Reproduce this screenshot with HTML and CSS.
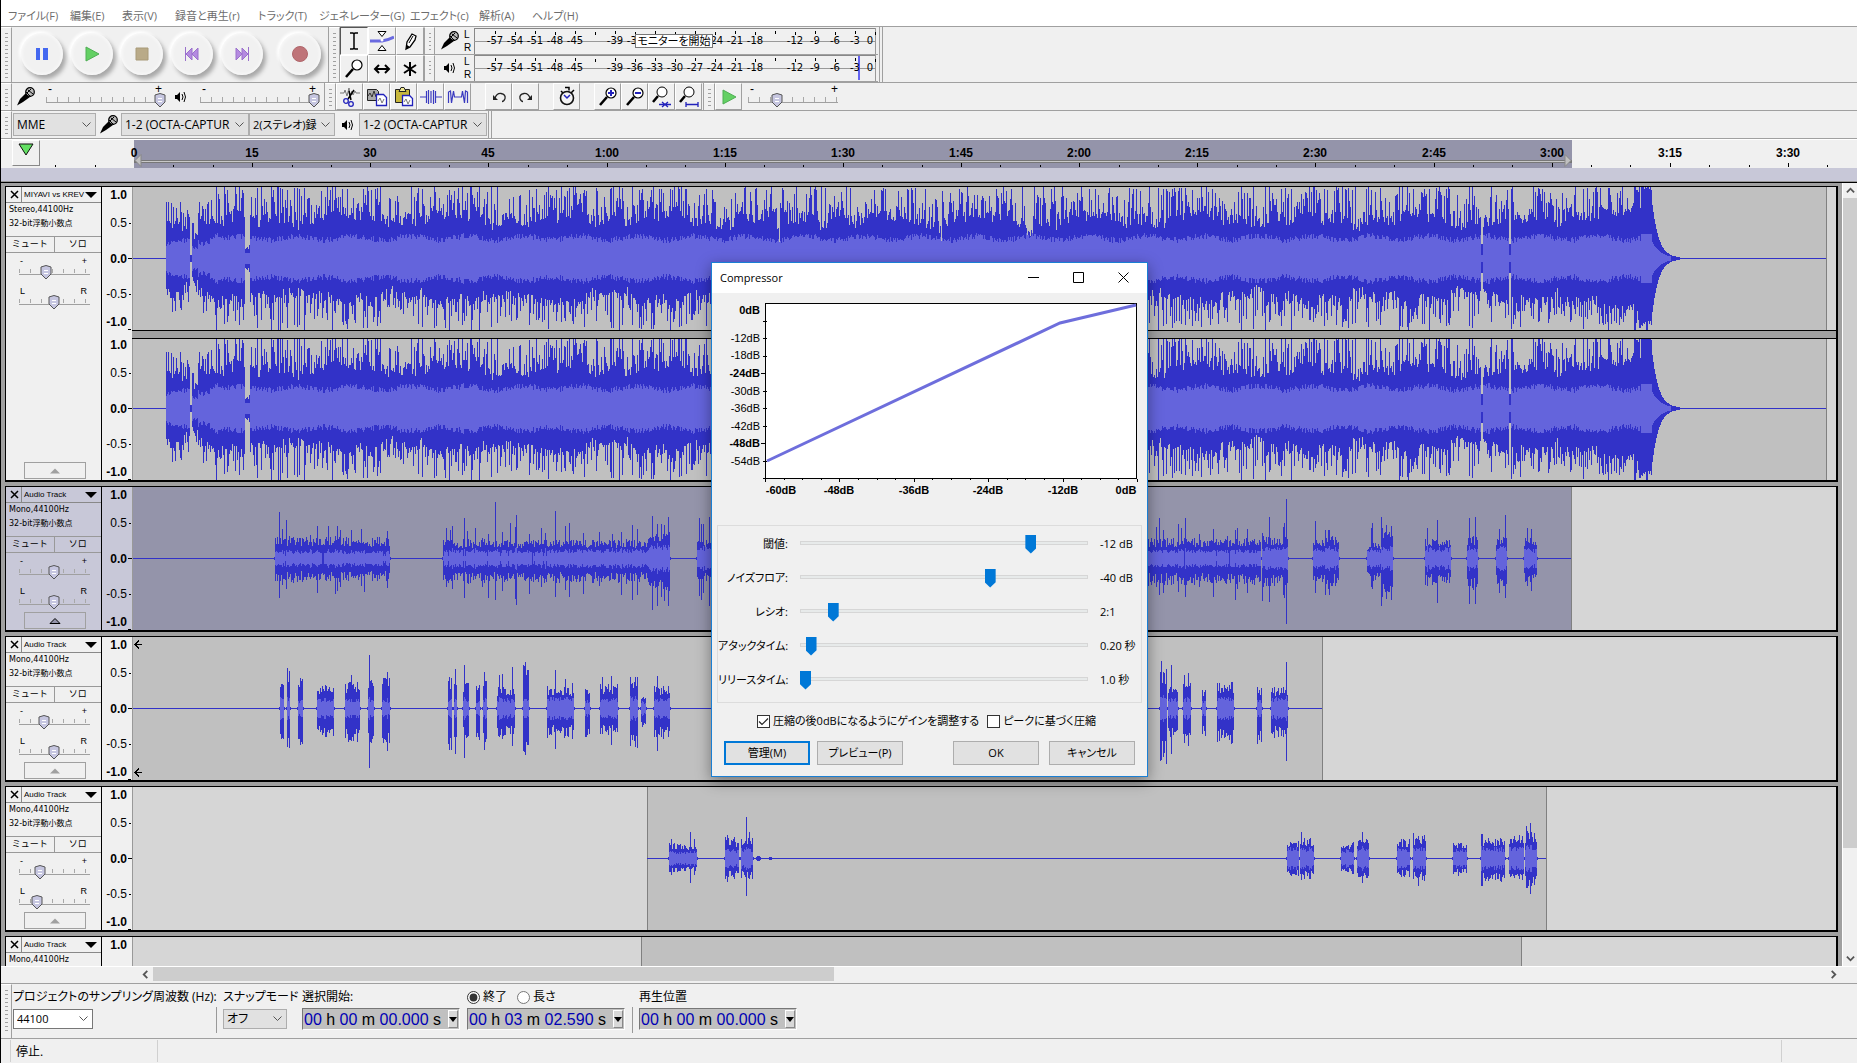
FILE: index.html
```html
<!DOCTYPE html>
<html lang="ja">
<head>
<meta charset="utf-8">
<title>Audacity</title>
<link rel="stylesheet" href="styles.css">
</head>
<body>
<svg class="defs" aria-hidden="true">
  <defs>
    <symbol id="mic" viewBox="0 0 18 19"><path d="M0 18.500L3 12L9 6L13 10L6 15Z" fill="#000"/><circle cx="13" cy="5" r="4.300" fill="#bbb" stroke="#000" stroke-width="1.200"/><path d="M9 5l5 5M11 3l5 4M14 2l-4 4" stroke="#000" fill="none"/></symbol>
    <symbol id="speaker" viewBox="0 0 14 14"><path d="M1 5h2l3-3v10l-3-3H1z" fill="#000"/><path d="M8 4q2 3 0 6M10 2q3 5 0 10" stroke="#000" fill="none"/></symbol>
    <symbol id="ibeam" viewBox="0 0 24 24"><path d="M8 4h3l1 1 1-1h3M8 20h3l1-1 1 1h3M12 5v14" stroke="#000" stroke-width="1.5" fill="none"/></symbol>
    <symbol id="envelope" viewBox="0 0 24 24"><path d="M0 12h12q6-1 12-4" stroke="#6a6ae0" stroke-width="3" fill="none"/><circle cx="12" cy="11" r="1.5" fill="#fff"/><path d="M8 2.500h8l-4 5zM8 21.500h8l-4-5z" fill="#fff" stroke="#000"/></symbol>
    <symbol id="pencil" viewBox="0 0 24 24"><path d="M8 20l1-7 5-8 4 2-1 4-5 7z" fill="#fff" stroke="#000" stroke-width="1.300"/><path d="M8 20l1-4 3 2z"/><path d="M11 14l4-7" stroke="#000" fill="none"/></symbol>
    <symbol id="lens" viewBox="0 0 24 24"><circle cx="15" cy="8" r="5" fill="#fff" stroke="#000" stroke-width="1.200"/><path d="M11 12l-7 8" stroke="#000" stroke-width="2.500"/></symbol>
    <symbol id="shift" viewBox="0 0 24 24"><path d="M5 12h14M9 8l-4 4 4 4M15 8l4 4-4 4" stroke="#000" stroke-width="2" fill="none"/></symbol>
    <symbol id="multi" viewBox="0 0 24 24"><path d="M12 5v14M6 8l12 8M18 8L6 16" stroke="#000" stroke-width="2" fill="none"/></symbol>
    <symbol id="cut" viewBox="0 0 24 24"><path d="M2 8h4l1-3 2 6 2-8 1 8 2-5 1 4 2-4 1 2h4" stroke="#777" fill="none"/><path d="M10 14L16 5M13 15L11 6" stroke="#000" stroke-width="1.500"/><circle cx="8" cy="16" r="2.300" fill="none" stroke="#2222bb" stroke-width="1.300"/><circle cx="13" cy="19" r="2.300" fill="none" stroke="#2222bb" stroke-width="1.300"/></symbol>
    <symbol id="copy" viewBox="0 0 24 24"><path d="M2.500 4.500h9l2 2v9h-11z" fill="#aaa" stroke="#222"/><path d="M3 11l2-3 2 4 2-6 2 6" stroke="#333" fill="none"/><path d="M11.500 9.500h7l3 3v8h-10z" fill="#fff" stroke="#2222bb" stroke-width="1.300"/><path d="M13 16l2-3 2 5 2-4" stroke="#777" fill="none"/></symbol>
    <symbol id="paste" viewBox="0 0 24 24"><path d="M3.500 4.500h14v13h-14z" fill="#c8b83c" stroke="#222"/><path d="M7 6.500h7l-2-4H9z" fill="#f0e890" stroke="#222"/><path d="M10.500 10.500h7l3 3v7h-10z" fill="#fff" stroke="#2222bb" stroke-width="1.300"/><path d="M12 17l2-3 2 5 2-4" stroke="#777" fill="none"/></symbol>
    <symbol id="trim" viewBox="0 0 24 24"><path d="M1 12h6M17 12h6M7.500 6v12M9.500 5v14M12 6v12M14.500 5v14M16.500 6v12" stroke="#3a3ac0" stroke-width="1.200"/></symbol>
    <symbol id="silence" viewBox="0 0 24 24"><path d="M2.500 18V7l2-1 1 12 2-12 1 6h7l1-6 2 12 1-12 2 1v11" stroke="#3a3ac0" stroke-width="1.200" fill="none"/></symbol>
    <symbol id="undo" viewBox="0 0 24 24"><path d="M8 13Q10 8 14 8.500q5 1 4 5-1 3-3 3" stroke="#222" stroke-width="1.300" fill="none"/><path d="M6 10v5h5z" fill="#222"/></symbol>
    <symbol id="redo" viewBox="0 0 24 24"><path d="M16 13Q14 8 10 8.500q-5 1-4 5 1 3 3 3" stroke="#222" stroke-width="1.300" fill="none"/><path d="M18 10v5h-5z" fill="#222"/></symbol>
    <symbol id="clock" viewBox="0 0 24 24"><path d="M10 2.500h4v3M6 6l2 2M19 5l-3 3" stroke="#000" stroke-width="1.500" fill="none"/><circle cx="12" cy="13" r="6.500" fill="#f4f4f4" stroke="#111" stroke-width="1.600"/><path d="M9 10l3 3 3-3" stroke="#2222bb" stroke-width="1.500" fill="none"/></symbol>
    <symbol id="zoomin" viewBox="0 0 24 24"><use href="#lens"/><path d="M12 8h6M15 5v6" stroke="#2222bb" stroke-width="2"/></symbol>
    <symbol id="zoomout" viewBox="0 0 24 24"><use href="#lens"/><path d="M12 8h6" stroke="#2222bb" stroke-width="2"/></symbol>
    <symbol id="fitsel" viewBox="0 0 24 24"><circle cx="12" cy="7" r="5" fill="#fff" stroke="#000"/><path d="M8 11l-5 6" stroke="#000" stroke-width="2.500"/><path d="M9 19.500h12M12 17l3 2.500-3 2.500M18 17l-3 2.500 3 2.500" stroke="#2222bb" stroke-width="1.300" fill="none"/></symbol>
    <symbol id="fitproj" viewBox="0 0 24 24"><circle cx="12" cy="7" r="5" fill="#fff" stroke="#000"/><path d="M8 11l-5 6" stroke="#000" stroke-width="2.500"/><path d="M9 19.500h12M9 17v5M21 17v5" stroke="#2222bb" stroke-width="1.300" fill="none"/></symbol>
    <symbol id="play" viewBox="0 0 24 24"><path d="M6 5l13 7-13 7z" fill="#63d063" stroke="#4fae55"/></symbol>
    <symbol id="pause" viewBox="0 0 24 24"><path d="M6 6h4v12H6zM13 6h5v12h-5z" fill="#4468f0"/></symbol>
    <symbol id="stop" viewBox="0 0 24 24"><path d="M6 6h12v12H6z" fill="#b9aa88" stroke="#a89a78"/></symbol>
    <symbol id="start" viewBox="0 0 24 24"><path d="M5.500 5v14M12 6l-6 6 6 6zM18 6l-6 6 6 6z" fill="#b48ae0" stroke="#9a70cc"/></symbol>
    <symbol id="end" viewBox="0 0 24 24"><path d="M18.500 5v14M12 6l6 6-6 6zM6 6l6 6-6 6z" fill="#b48ae0" stroke="#9a70cc"/></symbol>
    <symbol id="record" viewBox="0 0 24 24"><circle cx="12" cy="12" r="7.500" fill="#bf7479" stroke="#b0666b"/></symbol>
  </defs>
</svg>

<nav class="menubar">
  <a href="#">ファイル(F)</a><a href="#">編集(E)</a><a href="#">表示(V)</a><a href="#">録音と再生(r)</a><a href="#">トラック(T)</a><a href="#">ジェネレーター(G)</a><a href="#">エフェクト(c)</a><a href="#">解析(A)</a><a href="#">ヘルプ(H)</a>
</nav>

<div class="row row-main">
  <span class="grip"></span>
  <div class="transport">
    <button aria-label="一時停止"><svg><use href="#pause"/></svg></button>
    <button aria-label="再生"><svg><use href="#play"/></svg></button>
    <button aria-label="停止"><svg><use href="#stop"/></svg></button>
    <button aria-label="先頭へ"><svg><use href="#start"/></svg></button>
    <button aria-label="末尾へ"><svg><use href="#end"/></svg></button>
    <button class="rec" aria-label="録音"><svg><use href="#record"/></svg></button>
  </div>
  <span class="grip"></span>
  <div class="tools">
    <button class="tool on" aria-label="選択"><svg><use href="#ibeam"/></svg></button>
    <button class="tool" aria-label="エンベロープ"><svg><use href="#envelope"/></svg></button>
    <button class="tool" aria-label="描画"><svg><use href="#pencil"/></svg></button>
    <button class="tool" aria-label="ズーム"><svg><use href="#lens"/></svg></button>
    <button class="tool" aria-label="タイムシフト"><svg><use href="#shift"/></svg></button>
    <button class="tool" aria-label="マルチツール"><svg><use href="#multi"/></svg></button>
  </div>
  <div class="meters">
    <div class="meter"><span class="grip"></span><svg class="ic-mic"><use href="#mic"/></svg><span class="lr"><i>L</i><i>R</i></span><svg class="scale" data-kind="rec"></svg><span class="tip">モニターを開始</span></div>
    <div class="meter"><span class="grip"></span><svg class="ic-spk"><use href="#speaker"/></svg><span class="lr"><i>L</i><i>R</i></span><svg class="scale" data-kind="play"></svg></div>
  </div>
  <span class="endcap"></span>
</div>

<div class="row">
  <span class="grip"></span>
  <div class="mixer">
    <svg class="ic-mic"><use href="#mic"/></svg>
    <div class="vol"><span class="pm"><b>-</b><b>+</b></span><input class="slide" type="range" value="100" aria-label="録音音量"></div>
    <svg class="ic-spk"><use href="#speaker"/></svg>
    <div class="vol"><span class="pm"><b>-</b><b>+</b></span><input class="slide" type="range" value="100" aria-label="再生音量"></div>
  </div>
  <span class="grip"></span>
  <div class="edit">
    <div class="group"><button class="tool" aria-label="切り取り"><svg><use href="#cut"/></svg></button><button class="tool" aria-label="コピー"><svg><use href="#copy"/></svg></button><button class="tool" aria-label="貼り付け"><svg><use href="#paste"/></svg></button><button class="tool" aria-label="トリム"><svg><use href="#trim"/></svg></button><button class="tool" aria-label="無音化"><svg><use href="#silence"/></svg></button></div>
    <div class="group"><button class="tool" aria-label="元に戻す"><svg><use href="#undo"/></svg></button><button class="tool" aria-label="やり直す"><svg><use href="#redo"/></svg></button></div>
    <div class="group"><button class="tool" aria-label="同期ロック"><svg><use href="#clock"/></svg></button></div>
    <div class="group"><button class="tool" aria-label="拡大"><svg><use href="#zoomin"/></svg></button><button class="tool" aria-label="縮小"><svg><use href="#zoomout"/></svg></button><button class="tool" aria-label="選択範囲に合わせる"><svg><use href="#fitsel"/></svg></button><button class="tool" aria-label="全体に合わせる"><svg><use href="#fitproj"/></svg></button></div>
  </div>
  <span class="grip"></span>
  <button class="tool" aria-label="指定速度で再生"><svg><use href="#play"/></svg></button>
  <div class="vol speed"><span class="pm"><b>-</b><b>+</b></span><input class="slide" type="range" value="30" aria-label="再生速度"></div>
</div>

<div class="row devices">
  <span class="grip"></span>
  <select class="host" aria-label="ホスト"><option>MME</option></select>
  <svg class="ic-mic"><use href="#mic"/></svg>
  <select class="device" aria-label="録音デバイス"><option>1-2 (OCTA-CAPTUR</option></select>
  <select class="host channels" aria-label="チャンネル"><option>2(ステレオ)録</option></select>
  <svg class="ic-spk"><use href="#speaker"/></svg>
  <select class="device" aria-label="再生デバイス"><option>1-2 (OCTA-CAPTUR</option></select>
  <span class="endcap"></span>
</div>

<div class="timeline">
  <button class="pin" aria-label="再生ヘッド"><svg viewBox="0 0 16 13"><path d="M1 1h14L8 12z" fill="#63e063" stroke="#111"/></svg></button>
  <svg id="ruler"></svg>
</div>
<div class="subruler"></div>

<main class="workspace">
  <div class="tracks" id="tracks"></div>
  <div class="vscroll"><span class="arrow"><svg viewBox="0 0 10 10"><path d="M1 7l4-4 4 4" /></svg></span><span class="vthumb"></span><span class="arrow low"><svg viewBox="0 0 10 10"><path d="M1 3l4 4 4-4" /></svg></span></div>
</main>
<div class="hscroll"><span class="arrow"><svg viewBox="0 0 10 10"><path d="M7 1L3 5l4 4" /></svg></span><span class="hthumb"></span><span class="arrow"><svg viewBox="0 0 10 10"><path d="M3 1l4 4-4 4" /></svg></span></div>

<footer class="selection">
  <span class="grip"></span>
  <div class="field rate"><label for="rate">プロジェクトのサンプリング周波数 (Hz):</label><select id="rate"><option>44100</option></select></div>
  <span class="rule"></span>
  <div class="field snap"><label for="snap">スナップモード</label><select id="snap"><option>オフ</option></select></div>
  <div class="field"><span>選択開始:</span><div class="time"><span><b>00</b> h <b>00</b> m <b>00.000</b> s</span><button aria-label="形式"></button></div></div>
  <div class="field"><span class="radios"><label><input type="radio" name="mode" checked>終了</label><label><input type="radio" name="mode">長さ</label></span><div class="time"><span><b>00</b> h <b>03</b> m <b>02.590</b> s</span><button aria-label="形式"></button></div></div>
  <span class="rule"></span>
  <div class="field"><span>再生位置</span><div class="time"><span><b>00</b> h <b>00</b> m <b>00.000</b> s</span><button aria-label="形式"></button></div></div>
</footer>
<div class="status"><span class="s1">停止.</span><span class="s2"></span></div>

<section class="dialog" role="dialog" aria-label="Compressor">
  <header><h1>Compressor</h1>
    <button aria-label="最小化"><svg viewBox="0 0 11 11"><path d="M0 5.500h11"/></svg></button><button aria-label="最大化"><svg viewBox="0 0 11 11"><path d="M.5.5h10v10H.5z"/></svg></button><button aria-label="閉じる"><svg viewBox="0 0 11 11"><path d="M.5.5l10 10M10.500.5l-10 10"/></svg></button>
  </header>
  <svg id="curve"></svg>
  <div class="params">
    <label for="p1">閾値:</label><input id="p1" type="range" min="-60" max="-1" value="-12"><output>-12 dB</output>
    <label for="p2">ノイズフロア:</label><input id="p2" type="range" min="-80" max="-20" value="-40"><output>-40 dB</output>
    <label for="p3">レシオ:</label><input id="p3" type="range" value="10"><output>2:1</output>
    <label for="p4">アタックタイム:</label><input id="p4" type="range" value="2"><output>0.20 秒</output>
    <label for="p5">リリースタイム:</label><input id="p5" type="range" value="0"><output>1.0 秒</output>
  </div>
  <div class="checks"><label><input type="checkbox" checked>圧縮の後0dBになるようにゲインを調整する</label><label><input type="checkbox">ピークに基づく圧縮</label></div>
  <div class="actions"><button class="primary">管理(M)</button><button>プレビュー(P)</button><button class="ok">OK</button><button>キャンセル</button></div>
</section>
<script src="app.js"></script>
</body>
</html>
```
FILE: styles.css
```css
* { box-sizing: border-box; }
html, body { height: 100%; }
body {
  margin: 0; display: flex; flex-direction: column; overflow: hidden; position: relative;
  border-left: 1px solid #000; background: #f0f0f0; color: #000;
  font: 12px/16px "Open Sans", "Noto Sans CJK JP", sans-serif;
  font-feature-settings: "palt";
}
button, select, input { font: inherit; font-feature-settings: inherit; color: inherit; margin: 0; padding: 0; border-radius: 0; }
svg { display: block; flex: none; }
.defs { position: absolute; width: 0; height: 0; }
a { color: inherit; text-decoration: none; }

.menubar { flex: none; display: grid; grid-template-columns: 62px 52px 53px 83px 61px 91px 69px 53px auto; justify-content: start; height: 27px; padding: 8px 0 0 7px; background: #fff; border-bottom: 1px solid #a0a0a0; color: #6d6d6d; font-size: 11px; white-space: nowrap; }

.row { flex: none; display: flex; height: 28px; border-bottom: 1px solid #a0a0a0; }
.row-main { height: 56px; }
.grip { flex: none; width: 11px; border-right: 1px solid #a0a0a0; background: repeating-linear-gradient(#a0a0a0 0 1px, transparent 1px 4px) content-box; padding: 5px 3px 4px 4px; border-top: 1px solid #fff; }
.endcap { width: 4px; margin-left: 1px; border: solid #a0a0a0; border-width: 0 1px; }

.transport { width: 317px; display: flex; align-items: center; gap: 8px; padding: 0 0 2px 9px; border-right: 1px solid #a0a0a0; }
.transport button { width: 42px; height: 42px; display: grid; place-items: center; border: 0; border-radius: 50%; background: #f1f1f1; box-shadow: 3px 4px 4px #a8a8a8, -2px -2px 3px #fff, inset 0 0 4px #fff; }
.transport svg { width: 24px; height: 24px; }
.transport .rec { margin-left: 8px; }

.tool { flex: none; width: 27px; height: 27px; display: grid; place-items: center; background: #f0f0f0; border: 1px solid; border-color: #fff #a0a0a0 #a0a0a0 #fff; }
.tool svg { width: 24px; height: 24px; }
.tools { display: grid; grid-template-columns: 28px 28px 28px; grid-template-rows: 28px 27px; }
.tools .tool { width: 28px; height: auto; }
.tools .on { border-color: #555 #fff #fff #555; }

.meters { display: grid; grid-template-rows: 28px 27px; }
.meter { display: flex; align-items: center; position: relative; border-bottom: 1px solid #a0a0a0; }
.meter .grip { align-self: stretch; border-left: 1px solid #a0a0a0; }
.meter .ic-mic { margin-left: 6px; }
.meter .ic-spk { margin: 0 2px 0 8px; }
.lr { width: 11px; margin-left: 5px; margin-right: -1px; font: 10px/13px "Liberation Sans", sans-serif; }
.lr i { display: block; font-style: normal; }
.scale { width: 404px; height: 26px; font: 10px "DejaVu Sans", sans-serif; }
.tip { position: absolute; left: 211px; top: 7px; width: 78px; height: 14px; border: 1px solid #777; background: #fff; font-size: 11px; line-height: 12px; text-align: center; white-space: nowrap; }
.ic-mic { width: 18px; height: 19px; }
.ic-spk { width: 14px; height: 14px; }

.mixer { width: 313px; display: flex; align-items: center; padding-left: 5px; border-right: 1px solid #a0a0a0; }
.mixer .ic-spk { margin-left: 8px; }
.vol { width: 122px; margin-left: 9px; }
.vol + .ic-spk + .vol { margin-left: 10px; }
.pm { display: flex; justify-content: space-between; padding: 0 4px; font: 12px/8px "Liberation Sans", sans-serif; }
.pm b { font-weight: 400; }
.slide { -webkit-appearance: none; appearance: none; display: block; width: 100%; height: 15px; background:
  linear-gradient(#a0a0a0, #a0a0a0) 2px 9px / calc(100% - 6px) 1px no-repeat,
  repeating-linear-gradient(to right, #a8a8a8 0 1px, transparent 1px 11px) 2px 4px / calc(100% - 6px) 5px no-repeat; }
.slide::-webkit-slider-thumb { -webkit-appearance: none; width: 12px; height: 15px; border: 0; background: url("data:image/svg+xml,%3Csvg xmlns='http://www.w3.org/2000/svg' viewBox='0 0 12 15'%3E%3Cpath d='M1 2q5-3 10 0v7l-5 5-5-5z' fill='%23c6c6e0' stroke='%23555'/%3E%3Cpath d='M4 5.500h4M4 8.500h4' stroke='%23fff'/%3E%3C/svg%3E") no-repeat; }
.edit { display: flex; gap: 14px; padding-right: 1px; border-right: 1px solid #a0a0a0; }
.group { display: flex; }
.speed { width: 96px; margin: 2px 0 0 4px; }

select { -webkit-appearance: none; appearance: none; border: 1px solid #adadad; background: #e1e1e1 url("data:image/svg+xml,%3Csvg xmlns='http://www.w3.org/2000/svg' viewBox='0 0 9 6'%3E%3Cpath d='M.5.5l4 4 4-4' fill='none' stroke='%23555'/%3E%3C/svg%3E") no-repeat right 4px center / 9px 6px; padding: 0 3px; }
.devices { align-items: center; }
.devices select { height: 23px; }
.devices .grip, .devices .endcap { align-self: stretch; }
.host { width: 86px; }
.grip + .host { width: 83px; margin-left: 1px; }
.devices .channels { font-size: 11px; }
.device { width: 128px; }
.devices .ic-mic { margin: 0 3px 0 4px; }
.devices .ic-spk { margin: 0 4px 0 6px; }

.timeline { flex: none; display: flex; height: 29px; border-top: 1px solid #fff; overflow: hidden; }
.pin { flex: none; width: 28px; height: 26px; margin-left: 11px; padding: 2px 0 0 5px; border: 1px solid; border-color: #fff #888 #888 #fff; background: #f0f0f0; display: grid; align-items: start; }
.pin svg { width: 16px; height: 13px; }
#ruler { flex: 1; height: 28px; font: bold 12px "Liberation Sans", sans-serif; }
.subruler { flex: none; height: 15px; background: #c8c8d8; border-bottom: 1px solid #000; box-shadow: inset 0 -1px #999; }

.workspace { flex: 1; min-height: 0; display: flex; background: #a0a0a0; }
.tracks { flex: 1; min-width: 0; overflow: hidden; padding: 3px 4px 0 4px; display: flex; flex-direction: column; gap: 4px; }
.track { flex: none; display: grid; grid-template-columns: 96px 1fr; height: 146px; border: solid #000; border-width: 1px 2px 2px 1px; background: #f0f0f0; }
.track.stereo { height: 296px; }
.track.sel { background: #c8c8d8; }
.panel { display: flex; flex-direction: column; border-right: 1px solid #000; font: 9px/16px "DejaVu Sans", "Noto Sans CJK JP", sans-serif; min-height: 0; }
.title { display: grid; grid-template-columns: 16px 1fr; height: 16px; border-bottom: 1px solid #888; }
.title button { border: 0; border-right: 1px solid #888; background: none; padding: 0 0 0 4px; }
.title svg { width: 9px; height: 9px; }
.title .name { display: flex; align-items: center; justify-content: space-between; padding: 0 4px 0 2px; font: 8px/14px "Liberation Sans", sans-serif; white-space: nowrap; }
.name::after { content: ""; flex: none; border: solid transparent; border-width: 6px 6px 0; border-top-color: #000; }
.info { height: 33px; padding-left: 3px; font-size: 8px; white-space: nowrap; line-height: 14px; }
.ms { display: grid; grid-template-columns: 1fr 1fr; height: 17px; border: solid #999; border-width: 1px 0; }
.ms button { border: 0; background: none; font-size: 9px; line-height: 15px; }
.ms button + button { border-left: 1px solid #999; }
.panel .vol { width: 77px; margin: 6px 0 1px 11px; }
.panel .ms + .vol { margin-top: 4px; }
.panel .pm { font-size: 9px; padding: 0 7px 0 3px; }
.panel .slide { background-size: calc(100% - 6px) 1px, calc(100% - 6px) 4px; }
.fold { width: 62px; height: 17px; margin: auto 0 1px 18px; border: 1px solid #a0a0a0; background: none; display: grid; place-items: center; flex: none; }
.fold svg { width: 12px; height: 7px; fill: #a0a0a0; }
.sel .fold svg { fill: #9494aa; stroke: #000; }
.chans { display: grid; grid-auto-rows: 143px; row-gap: 7px; min-width: 0; }
.chan { display: grid; grid-template-columns: 31px 1fr; min-width: 0; position: relative; }
.stereo .chan + .chan::before { content: ""; position: absolute; left: 30px; right: 0; top: -7px; height: 7px; border: solid #000; border-width: 1px 0; background: #a0a0a0; }
.vr { height: 143px; border-right: 1px solid #999; font: 12px/14px "Liberation Sans", sans-serif; width: 31px; }
.wave { width: 100%; height: 143px; background: #d6d6d6; min-width: 0; }

.vscroll { flex: none; width: 15px; display: flex; flex-direction: column; background: #f0f0f0; border-left: 1px solid #fff; }
.arrow { flex: none; display: grid; place-items: center; width: 15px; height: 15px; }
.arrow svg { width: 9px; height: 9px; fill: none; stroke: #555; stroke-width: 2; }
.vthumb { flex: 0 0 83%; background: #cdcdcd; }
.low { margin-top: auto; }
.hscroll { flex: none; display: flex; height: 17px; padding: 0 16px 2px 137px; border-top: 1px solid #fff; }
.hthumb { flex: 0 0 40%; background: #cdcdcd; }
.hthumb + .arrow { margin-left: auto; }

.selection { flex: none; display: flex; height: 56px; border: solid #a0a0a0; border-width: 1px 0; }
.field { display: flex; flex-direction: column; margin-right: 7px; padding-top: 5px; gap: 3px; white-space: nowrap; }
.field select { height: 20px; margin-top: 1px; }
.rate { width: 203px; margin-left: 1px; margin-right: 0; }
.rate select { width: 80px; background-color: #fff; border-color: #777; font-size: 11px; }
.snap { width: 73px; margin-right: 6px; }
.snap select { width: 64px; }
.rule { width: 1px; height: 26px; margin: 23px 6px 0 0; background: #999; }
.radios { display: flex; gap: 10px; }
.radios label { display: flex; align-items: center; gap: 3px; }
.radios input { width: 13px; height: 13px; accent-color: #333; }
.time { display: flex; width: 158px; height: 22px; padding: 1px; background: #c0c0c0; border: 1px solid; border-color: #777 #fff #fff #777; font: 16px/19px "Liberation Sans", sans-serif; justify-content: space-between; }
.time b { font-weight: 400; color: #0000b4; }
.time button { width: 10px; border: 1px solid; border-color: #fff #888 #888 #fff; background: #d8d8d8; display: grid; place-items: center; }
.time button::after { content: ""; border: solid transparent; border-width: 5px 4px 0; border-top-color: #000; }
.status { flex: none; display: flex; height: 24px; padding: 1px 0 1px 9px; }
.status span { border-left: 1px solid #d0d0d0; padding: 4px 5px; }
.s1 { width: 148px; border-right: 1px solid #d0d0d0; }
.status .s2 { margin-left: auto; width: 76px; }

.dialog { position: absolute; left: calc(50% - 218px); top: 262px; width: 437px; background: #f0f0f0; border: 1px solid #1a7fd4; box-shadow: 0 4px 14px rgba(0,0,0,.4); padding-bottom: 11px; }
.dialog header { display: flex; height: 30px; background: #fff; align-items: center; padding: 0 1px 1px 0; }
.dialog h1 { flex: 1; margin: 0 0 0 8px; font: inherit; font-size: 11px; }
.dialog header button { width: 45px; height: 29px; border: 0; background: none; display: grid; place-items: center; }
.dialog header svg { width: 11px; height: 11px; fill: none; stroke: #000; }
#curve { width: 435px; height: 232px; font: 11px "Liberation Sans", sans-serif; }
.params { margin: 0 5px; height: 178px; padding: 1px 0; border: 1px solid #dcdcdc; display: grid; grid-template-columns: 70px 288px 1fr; grid-auto-rows: 34px; column-gap: 12px; align-items: center; white-space: nowrap; font-size: 11px; }
.params label { text-align: right; }
.params input { -webkit-appearance: none; appearance: none; height: 19px; background: linear-gradient(#e7eaea, #e7eaea) 1px 7px / calc(100% - 2px) 2px no-repeat, linear-gradient(#d6d6d6, #d6d6d6) 0 6px / 100% 4px no-repeat; }
.params input::-webkit-slider-thumb { -webkit-appearance: none; width: 11px; height: 19px; background: #0078d7; clip-path: polygon(0 0, 100% 0, 100% 72%, 50% 100%, 0 72%); }
.checks { display: flex; gap: 8px; padding: 10px 0 0 45px; font-size: 11px; white-space: nowrap; }
.checks label { display: flex; align-items: center; gap: 3px; }
.checks input { -webkit-appearance: none; appearance: none; width: 13px; height: 13px; border: 1px solid #333; background: #fff; }
.checks input:checked { background: #fff url("data:image/svg+xml,%3Csvg xmlns='http://www.w3.org/2000/svg' viewBox='0 0 11 11'%3E%3Cpath d='M1 5.500l3 3 6-6' fill='none' stroke='%23222' stroke-width='1.200'/%3E%3C/svg%3E"); }
.actions { display: flex; gap: 7px; padding: 12px 12px 0; }
.actions button { width: 86px; height: 24px; border: 1px solid #adadad; background: #e1e1e1; font-size: 11px; }
.actions .primary { border: 2px solid #0078d7; }
.actions .ok { margin-left: 43px; margin-right: 3px; }
```
FILE: app.js
```js
const PEAK = '#3232c8', RMS = '#6464dc';
let seed = 7;
const rnd = () => (seed = (seed * 16807) % 2147483647) / 2147483647;
const rect = (x, y, w, h, c) => `<rect x="${x}" y="${y}" width="${w}" height="${h}" fill="${c}"/>`;
const ORIGIN = 133, MID = 71;

// Paints one column per pixel: [x, up, down, rms]
function columns(cols) {
  let p = '', r = '';
  for (const [x, u, d, m] of cols) {
    const up = Math.min(71, Math.round(u)), dn = Math.min(71, Math.round(d)), k = Math.round(m);
    p += `M${x - ORIGIN} ${MID - up}h1v${up + dn + 1}h-1z`;
    if (k > 1) r += `M${x - ORIGIN} ${MID - k}h1v${2 * k + 1}h-1z`;
  }
  return `<path d="${p}" fill="${PEAK}"/><path d="${r}" fill="${RMS}"/>`;
}

function music() {
  const cols = [];
  for (let x = 166; x < 1680; x++) {
    let u, d, m = (x < 210 ? 13 : 17) + rnd() * 6 + Math.sin(x / 9) * 2;
    const base = x < 190 ? 28 : x < 260 ? 31 : x > 1560 ? 39 : 33;
    const s = Math.sin(x / 17) * 4 + Math.sin(x / 5.3) * 3;
    u = base + s + rnd() * 14; d = base + s + rnd() * 12;
    if (rnd() < .42) u += 8 + rnd() * 18;
    if (rnd() < .4) d += 6 + rnd() * 16;
    if (x > 210 && rnd() < .09) { u = 68 + rnd() * 4; d = 60 + rnd() * 12; }
    if (x < 210) { u = Math.min(u, 56); d = Math.min(d, 54); }
    if ([216, 271, 278, 332].includes(x)) { u = 71; d = 71; }
    if (x > 213 && x < 222) m += 4;
    if (x > 189 && x < 192) { u = d = 3; m = 1; }
    else if (x < 198 && x > 190) { u *= .65; d *= .65; m *= .6; }
    if (x > 244 && x < 250) { u = 8 + rnd() * 7; d = u; m = 5; }
    if ((x > 1480 && x < 1483) || (x > 1508 && x < 1511)) { u = d = 14; m = 3; }
    if ((x > 776 && x < 780) || (x > 938 && x < 942) || (x > 1026 && x < 1033)) { u = 12 + rnd() * 20; d = u; }
    if (x > 1640 && x <= 1651) { u = 68 + rnd() * 6; d = 60 + rnd() * 14; m = 24; }
    if (x > 1651) { u = d = 62 * Math.exp(-(x - 1651) / 6.5); m = 18 * Math.exp(-(x - 1651) / 8); }
    cols.push([x, u, d, m]);
  }
  return columns(cols);
}

// burst: [x0, x1, up, down, rms, [[x, up, down], ...]]
function voice(bursts) {
  const cols = [];
  for (const [a, b, up, dn, rms, spikes = []] of bursts) {
    const at = new Map(spikes.map(s => [s[0], s]));
    for (let x = a; x < b; x++) {
      const k = .6 + rnd() * .5, s = at.get(x);
      let m = rms * (.6 + rnd() * .5);
      if (b - a > 50 && rnd() < .06) m *= .25;
      cols.push(s ? [x, s[1], s[2], m + 2] : [x, up * k, dn * (k + rnd() * .15), m]);
    }
    cols.push([a - 1, 1, 1, 0], [b, 1, 1, 0]);
  }
  return columns(cols);
}

const v2 = [
  [275, 390, 19, 19, 7, [[279,46,39],[282,29,26],[286,38,30],[289,22,18],[297,20,23],[310,23,20],[317,32,34],[328,32,20],[335,22,35],[337,32,32],[340,28,28],[351,28,18],[361,29,27],[364,14,33],[379,21,20],[387,27,29]]],
  [443, 649, 17, 20, 8, [[446,30,28],[450,28,20],[452,32,30],[464,40,39],[467,27,24],[475,30,20],[482,20,28],[488,24,39],[495,56,41],[502,26,32],[510,35,20],[515,31,40],[516,43,46],[529,24,35],[541,30,28],[545,25,20],[555,47,38],[565,32,31],[569,35,38],[583,25,35],[599,26,27],[612,24,20],[621,26,36],[632,33,41],[637,29,36]]],
  [649, 670, 24, 28, 12, [[652,42,51],[657,34,47],[661,34,38],[664,33,42],[668,41,47]]],
  [697, 715, 18, 20, 10, [[699,40,37],[701,34,41],[703,34,34],[709,41,47]]],
  [1146, 1261, 18, 22, 8, [[1156,31,28],[1159,40,36],[1163,28,34],[1178,34,33],[1181,30,25],[1185,40,38],[1199,24,28],[1213,29,38],[1227,22,20],[1235,28,41],[1237,30,30],[1247,29,34]]],
  [1262, 1288, 20, 24, 10, [[1262,25,42],[1269,41,43],[1283,31,36],[1284,35,39],[1286,59,65]]],
  [1313, 1339, 20, 24, 10, [[1315,37,34],[1325,28,36],[1328,28,30],[1329,28,36]]],
  [1367, 1381, 14, 18, 8, [[1371,30,28],[1372,35,30],[1381,41,47]]],
  [1381, 1393, 27, 32, 11, [[1381,41,47],[1386,33,40],[1391,32,41]]],
  [1425, 1451, 18, 22, 10, [[1427,30,27],[1437,38,44]]],
  [1467, 1478, 20, 26, 9, [[1469,40,45],[1475,41,45]]],
  [1496, 1507, 20, 24, 11, [[1499,29,34],[1505,43,39]]],
  [1524, 1537, 18, 20, 9, [[1527,30,27],[1531,29,32]]]
];
const v3 = [
  [280,284,30,34,10],[287,290,42,38,10],[298,303,30,36,8],[317,334,22,25,9],[345,360,24,28,9,[[351,33,32]]],[368,374,26,30,9,[[369,53,59]]],[382,390,28,28,8,[[387,36,42]]],
  [448,452,30,37,9],[454,457,36,40,9],[463,469,25,26,9,[[464,43,49]]],[476,480,22,28,7],[483,487,34,36,9],[497,515,20,25,9,[[499,33,28],[502,34,30],[512,41,37]]],[523,529,42,38,10],[547,574,20,25,10,[[555,38,40],[565,29,27],[572,25,30]]],[585,590,18,25,7],[600,618,23,22,9,[[602,31,25],[611,32,36]]],[630,638,31,34,11],[641,646,12,18,6],[654,670,20,24,10,[[657,32,42]]],
  [1160,1167,38,48,13,[[1161,47,51]]],[1168,1178,22,26,9,[[1171,43,45]]],[1183,1191,32,33,10],[1202,1206,18,24,7],[1217,1234,24,30,10],[1257,1262,20,30,8],[1271,1288,19,24,10,[[1286,46,52]]]
];
const v4 = [
  [669,697,14,12,6,[[671,19,16],[690,26,24],[694,19,16]]],[725,739,19,17,8,[[727,23,23]]],[741,753,20,18,9,[[746,41,37],[749,26,20]]],
  [757,760,2,2,0],[770,771,1,1,0],
  [1287,1299,18,17,10],[1300,1314,19,18,10,[[1301,26,21]]],[1341,1354,15,14,8],[1357,1369,20,19,9,[[1362,26,24]]],[1397,1410,18,16,9],[1413,1426,22,19,10,[[1413,25,20],[1418,22,27]]],[1453,1467,16,15,8],[1481,1505,19,20,10,[[1481,24,27],[1482,24,27]]],[1509,1524,21,18,11],[1525,1537,25,24,12,[[1526,32,29],[1530,35,35]]]
];

const clip = (a, b, fill, line, body) =>
  rect(a - ORIGIN, 0, b - a, 143, fill) + (a > ORIGIN ? rect(a - ORIGIN, 0, 1, 143, '#808080') : '') +
  rect(b - ORIGIN, 0, 1, 143, '#808080') + (line ? rect(a - ORIGIN, MID, b - a, 1, PEAK) : '') + body;
const arrowLeft = y => `<path d="M2 ${y}h7M6 ${y - 4}l-4 4 4 4" stroke="#000" fill="none"/>`;
const song = music();
const tracks = [
  { cls: 'stereo', name: 'MIYAVI vs KREV', fmt: 'Stereo,44100Hz', gain: 36, pan: 47, waves: [clip(133, 1826, '#c0c0c0', 1, song), clip(133, 1826, '#c0c0c0', 1, song)] },
  { cls: 'sel', gain: 47, pan: 47, waves: [clip(133, 1571, '#9494aa', 1, voice(v2))] },
  { cls: '', gain: 33, pan: 47, waves: [clip(133, 1322, '#c0c0c0', 1, voice(v3) + arrowLeft(7.5) + arrowLeft(135.5))] },
  { cls: '', gain: 26, pan: 22, waves: [clip(647, 1546, '#c0c0c0', 1, voice(v4))] },
  { cls: '', gain: 47, pan: 47, waves: [clip(641, 1521, '#c0c0c0', 0, '')] }
];
const vr = [['1.0', 12, 1], ['0.5', 40, 0], ['0.0', 76, 1], ['-0.5', 111, 0], ['-1.0', 139, 1]]
  .map(([t, y, b]) => `<text x="25" y="${y}" text-anchor="end" font-weight="${b ? 700 : 400}">${t}</text>`).join('') +
  rect(27, 36, 2, 1, '#000') + rect(26, 71, 4, 1, '#000') + rect(27, 107, 2, 1, '#000') + rect(26, 142, 3, 1, '#000');
const slider = (l, r, v, n) => `<div class="vol"><span class="pm"><b>${l}</b><b>${r}</b></span><input class="slide" type="range" value="${v}" aria-label="${n}"></div>`;
document.getElementById('tracks').innerHTML = tracks.map(t => `
<article class="track ${t.cls}"><div class="panel">
<div class="title"><button aria-label="閉じる"><svg viewBox="0 0 9 9"><path d="M1 1l7 7M8 1L1 8" stroke="#000" stroke-width="1.500"/></svg></button><span class="name">${t.name || 'Audio Track'}</span></div>
<div class="info">${t.fmt || 'Mono,44100Hz'}<br>32-bit浮動小数点</div>
<div class="ms"><button>ミュート</button><button>ソロ</button></div>
${slider('-', '+', t.gain, 'ゲイン')}${slider('L', 'R', t.pan, 'パン')}
<button class="fold" aria-label="折りたたむ"><svg viewBox="0 0 12 7"><path d="M1 6.500l5-5 5 5z"/></svg></button>
</div><div class="chans">${t.waves.map(w => `<div class="chan"><svg class="vr">${vr}</svg><svg class="wave" shape-rendering="crispEdges">${w}</svg></div>`).join('')}</div></article>`).join('');

// Time ruler, 15 seconds per 118 px
const rx = document.getElementById('ruler'), off = 40;
let out = rect(134 - off, 0, 1438, 28, '#9494aa') + rect(134 - off, 20, 1438, 3, '#777') + rect(141 - off, 21, 1424, 1, '#c8c8c8') +
  `<path d="M95 20.500l6-6v12zM${1571 - off} 20.500l-6-6v12z" fill="#c0c0c0" stroke="#888"/>`;
for (let s = -15; s <= 215; s += 5) {
  const x = Math.round(134 + s * 7.876 - off), major = s % 15 === 0;
  if (s !== 0) out += rect(x, major ? 23 : 25, 1, major ? 4 : 2, '#000');
  if (major && s >= 0) out += `<text x="${x}" y="17" text-anchor="middle">${s < 60 ? s : Math.floor(s / 60) + ':' + String(s % 60).padStart(2, '0')}</text>`;
}
rx.innerHTML = out;

// Level meters; the hint covers part of the recording scale
document.querySelectorAll('.scale').forEach(el => {
  const rec = el.dataset.kind === 'rec';
  let m = rect(0, 0, 402, 1, '#888') + rect(0, 0, 1, 26, '#888') + rect(0, 13, 402, 1, '#999') + rect(401, 0, 1, 26, '#999');
  if (!rec) m += rect(384, 1, 2, 24, '#6464f0');
  for (let k = 0; k < 20; k++) {
    const x = 21 + k * 20;
    m += rect(x, k % 2 ? 4 : 3, 1, 3, '#000');
    if (k === 5 || k === 14 || (rec && k > 7 && k < 11)) continue;
    m += `<text x="${k === 19 ? x - 5 : x}" y="16" text-anchor="middle">${k === 19 ? 0 : k * 3 - 57}</text>`;
  }
  el.innerHTML = m;
});

// Transfer curve
let c = rect(53, 10, 372, 176, '#000') + rect(54, 11, 370, 174, '#fff');
[['0dB', 21, 1], ['-12dB', 49, 0], ['-18dB', 66, 0], ['-24dB', 84, 1], ['-30dB', 102, 0], ['-36dB', 119, 0], ['-42dB', 137, 0], ['-48dB', 154, 1], ['-54dB', 172, 0]]
  .forEach(([t, y, b]) => { c += `<text x="48" y="${y}" text-anchor="end" font-weight="${b ? 700 : 400}">${t}</text>`; });
for (let i = 1; i <= 10; i++) c += rect(i === 4 || i === 8 ? 49 : 51, Math.round(10 + i * 17.5), 4, 1, '#000');
for (let i = 0; i <= 20; i++) c += rect(Math.round(53 + i * 18.6), 186, 1, i % 4 ? 1 : 3, '#000');
[['-60dB', 69], ['-48dB', 127], ['-36dB', 202], ['-24dB', 276], ['-12dB', 351], ['0dB', 414]]
  .forEach(([t, x]) => { c += `<text x="${x}" y="201" text-anchor="middle" font-weight="700">${t}</text>`; });
c += `<path d="M55 168L348 30L424 12" fill="none" stroke="#6e6edc" stroke-width="3"/>`;
document.getElementById('curve').innerHTML = c;
```
